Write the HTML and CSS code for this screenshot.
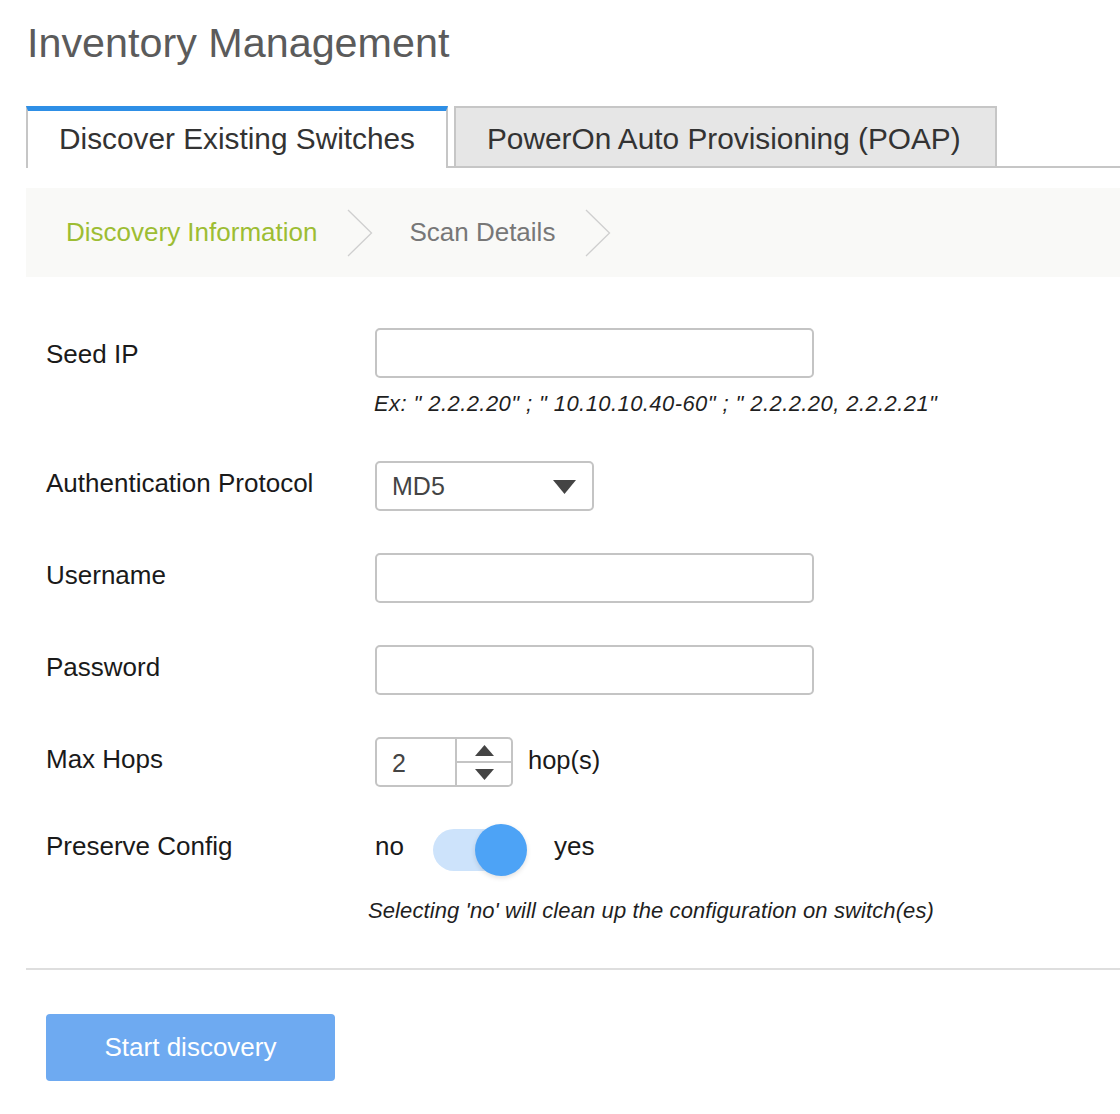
FILE: index.html
```html
<!DOCTYPE html>
<html lang="en">
<head>
<meta charset="utf-8">
<title>Inventory Management</title>
<link rel="stylesheet" href="styles.css">
</head>
<body>
<div class="page">
  <h1 class="title">Inventory Management</h1>

  <div class="tabs">
    <div class="tab tab-active">Discover Existing Switches</div>
    <div class="tab tab-inactive">PowerOn Auto Provisioning (POAP)</div>
  </div>

  <div class="steps">
    <span class="step step-current">Discovery Information</span>
    <svg class="chev" width="26" height="48" viewBox="0 0 26 48"><polyline points="1,1 24.5,24 1,47" fill="none" stroke="#cfcfcf" stroke-width="1.3"/></svg>
    <span class="step step-next">Scan Details</span>
    <svg class="chev" width="26" height="48" viewBox="0 0 26 48"><polyline points="1,1 24.5,24 1,47" fill="none" stroke="#cfcfcf" stroke-width="1.3"/></svg>
  </div>

  <form class="form">
    <div class="row">
      <label class="label label-seed">Seed IP</label>
      <div class="control">
        <input class="field" type="text">
        <div class="hint hint-seed">Ex: " 2.2.2.20" ; " 10.10.10.40-60" ; " 2.2.2.20, 2.2.2.21"</div>
      </div>
    </div>

    <div class="row">
      <label class="label">Authentication Protocol</label>
      <div class="control">
        <div class="select">
          <span class="select-value">MD5</span>
          <svg class="select-arrow" width="23" height="14" viewBox="0 0 23 14"><polygon points="0,0 23,0 11.5,14" fill="#444"/></svg>
        </div>
      </div>
    </div>

    <div class="row">
      <label class="label">Username</label>
      <div class="control"><input class="field" type="text"></div>
    </div>

    <div class="row">
      <label class="label">Password</label>
      <div class="control"><input class="field" type="password"></div>
    </div>

    <div class="row">
      <label class="label">Max Hops</label>
      <div class="control control-inline">
        <div class="spinner">
          <span class="spinner-value">2</span>
          <div class="spinner-btns">
            <div class="spin-btn">
              <svg width="19" height="11" viewBox="0 0 19 11"><polygon points="9.5,0 19,11 0,11" fill="#444"/></svg>
            </div>
            <div class="spin-btn spin-down">
              <svg width="19" height="11" viewBox="0 0 19 11"><polygon points="0,0 19,0 9.5,11" fill="#444"/></svg>
            </div>
          </div>
        </div>
        <span class="unit">hop(s)</span>
      </div>
    </div>

    <div class="row row-toggle">
      <label class="label label-toggle">Preserve Config</label>
      <div class="control">
        <div class="toggle-line">
          <span class="toggle-text">no</span>
          <div class="toggle"><span class="toggle-knob"></span></div>
          <span class="toggle-text">yes</span>
        </div>
        <div class="hint hint-preserve">Selecting 'no' will clean up the configuration on switch(es)</div>
      </div>
    </div>
  </form>

  <div class="divider"></div>

  <div class="actions">
    <button class="btn-primary" type="button">Start discovery</button>
  </div>
</div>
</body>
</html>
```

FILE: styles.css
```css
* {
  box-sizing: border-box;
}

body {
  margin: 0;
  background: #ffffff;
  font-family: "Liberation Sans", Arial, Helvetica, sans-serif;
  color: #1c1c1c;
}

.page {
  padding-left: 26px;
}

.title {
  margin: 19px 0 0 1px;
  font-size: 41.3px;
  line-height: 48px;
  font-weight: normal;
  color: #5b5b5b;
}

/* Tabs */
.tabs {
  display: flex;
  align-items: flex-start;
  margin-top: 39px;
  border-bottom: 2px solid #c6c6c6;
  height: 62px;
}

.tab {
  font-size: 29.8px;
  color: #333333;
  white-space: nowrap;
}

.tab-active {
  width: 422px;
  height: 62px;
  border-top: 5px solid #2e8fe6;
  border-left: 2px solid #c6c6c6;
  border-right: 2px solid #c6c6c6;
  background: #ffffff;
  padding-left: 31px;
  line-height: 55px;
}

.tab-inactive {
  width: 543px;
  height: 60px;
  margin-left: 6px;
  border: 2px solid #c6c6c6;
  border-bottom: none;
  background: #e6e6e6;
  padding: 3px 0 0 31px;
  line-height: 56px;
}

/* Step breadcrumb */
.steps {
  display: flex;
  align-items: center;
  height: 89px;
  margin-top: 20px;
  padding-left: 40px;
  background: #f9f9f7;
}

.step {
  font-size: 26px;
}

.step-current {
  color: #9dbd33;
}

.step-next {
  color: #777777;
}

.chev {
  display: block;
  margin: 0 36px 0 30px;
}

/* Form */
.form {
  padding: 51px 0 0 20px;
  display: flex;
  flex-direction: column;
  gap: 42px;
}

.row {
  display: flex;
  align-items: flex-start;
}

.label {
  width: 329px;
  flex-shrink: 0;
  font-size: 26px;
  line-height: 45px;
  color: #1a1a1a;
}

.label-seed {
  line-height: 53px;
}

.label-toggle {
  line-height: 42px;
  margin-top: -4px;
}

.control {
  display: flex;
  flex-direction: column;
}

.control-inline {
  flex-direction: row;
  align-items: center;
}

.field {
  width: 439px;
  height: 50px;
  border: 2px solid #c4c4c4;
  border-radius: 5px;
  background: #ffffff;
  font-family: inherit;
  font-size: 25px;
  padding: 0 15px;
  outline: none;
}

.hint {
  font-size: 22px;
  line-height: 30px;
  font-style: italic;
  color: #1f1f1f;
  white-space: nowrap;
}

.hint-seed {
  margin-top: 11px;
  margin-left: -1px;
  letter-spacing: 0.42px;
}

.hint-preserve {
  margin-top: 25px;
  margin-left: -7px;
  letter-spacing: 0.1px;
}

.select {
  width: 219px;
  height: 50px;
  border: 2px solid #c4c4c4;
  border-radius: 5px;
  display: flex;
  align-items: center;
  justify-content: space-between;
  padding: 0 16px 0 15px;
}

.select-value {
  font-size: 25px;
  color: #444444;
}

.select-arrow {
  display: block;
  margin-top: 1px;
}

/* Number spinner */
.spinner {
  width: 138px;
  height: 50px;
  border: 2px solid #c4c4c4;
  border-radius: 5px;
  display: flex;
}

.spinner-value {
  width: 80px;
  border-right: 2px solid #c4c4c4;
  font-size: 25px;
  line-height: 48px;
  padding-left: 15px;
  color: #444444;
}

.spinner-btns {
  flex: 1;
  display: flex;
  flex-direction: column;
}

.spin-btn {
  flex: 1;
  display: flex;
  align-items: center;
  justify-content: center;
}

.spin-btn svg {
  display: block;
}

.spin-down {
  border-top: 2px solid #c4c4c4;
}

.unit {
  margin-left: 15px;
  margin-bottom: 4px;
  font-size: 25.5px;
  color: #1a1a1a;
}

/* Toggle */
.toggle-line {
  display: flex;
  align-items: center;
  height: 42px;
}

.toggle-text {
  font-size: 26px;
  color: #1a1a1a;
  margin-bottom: 7px;
}

.toggle {
  position: relative;
  width: 94px;
  height: 42px;
  margin: 0 27px 0 29px;
}

.toggle::before {
  content: "";
  position: absolute;
  left: 0;
  top: 0;
  width: 80px;
  height: 42px;
  border-radius: 21px;
  background: #cde3fb;
}

.toggle-knob {
  position: absolute;
  right: 0;
  top: -5px;
  width: 52px;
  height: 52px;
  border-radius: 50%;
  background: #4da3f6;
  box-shadow: 0 2px 5px rgba(0, 0, 0, 0.12);
}

/* Footer */
.divider {
  margin-top: 42px;
  height: 2px;
  background: #dedede;
}

.actions {
  padding: 44px 0 0 20px;
}

.btn-primary {
  width: 289px;
  height: 67px;
  border: none;
  border-radius: 4px;
  background: #6eaaf1;
  color: #ffffff;
  font-family: inherit;
  font-size: 26px;
  cursor: pointer;
}
```
